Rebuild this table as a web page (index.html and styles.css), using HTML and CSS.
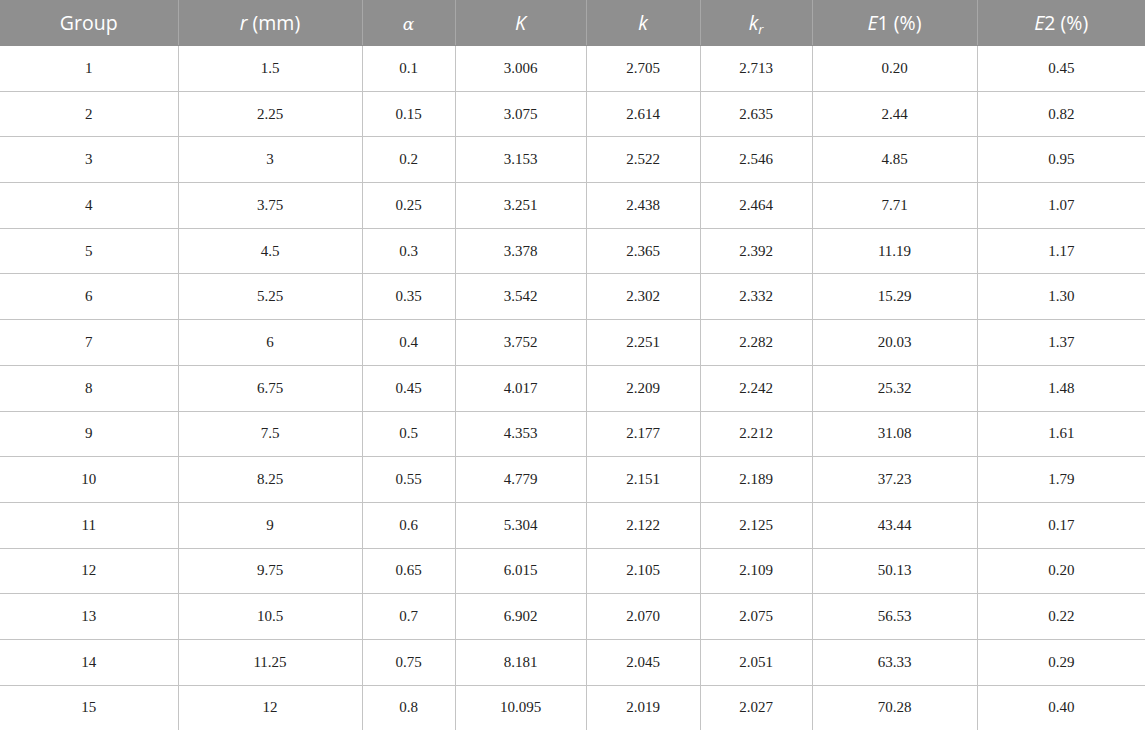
FILE: index.html
```html
<!DOCTYPE html>
<html>
<head>
<meta charset="utf-8">
<link rel="stylesheet" href="styles.css">
</head>
<body>
<table class="data">
<colgroup>
<col class="c1"><col class="c2"><col class="c3"><col class="c4"><col class="c5"><col class="c6"><col class="c7"><col class="c8">
</colgroup>
<thead>
<tr>
<th>Group</th>
<th><i>r</i> (mm)</th>
<th><i class="greek">α</i></th>
<th><i>K</i></th>
<th><i>k</i></th>
<th><i>k<sub>r</sub></i></th>
<th><i>E</i>1 (%)</th>
<th><i>E</i>2 (%)</th>
</tr>
</thead>
<tbody>
<tr><td>1</td><td>1.5</td><td>0.1</td><td>3.006</td><td>2.705</td><td>2.713</td><td>0.20</td><td>0.45</td></tr>
<tr><td>2</td><td>2.25</td><td>0.15</td><td>3.075</td><td>2.614</td><td>2.635</td><td>2.44</td><td>0.82</td></tr>
<tr><td>3</td><td>3</td><td>0.2</td><td>3.153</td><td>2.522</td><td>2.546</td><td>4.85</td><td>0.95</td></tr>
<tr><td>4</td><td>3.75</td><td>0.25</td><td>3.251</td><td>2.438</td><td>2.464</td><td>7.71</td><td>1.07</td></tr>
<tr><td>5</td><td>4.5</td><td>0.3</td><td>3.378</td><td>2.365</td><td>2.392</td><td>11.19</td><td>1.17</td></tr>
<tr><td>6</td><td>5.25</td><td>0.35</td><td>3.542</td><td>2.302</td><td>2.332</td><td>15.29</td><td>1.30</td></tr>
<tr><td>7</td><td>6</td><td>0.4</td><td>3.752</td><td>2.251</td><td>2.282</td><td>20.03</td><td>1.37</td></tr>
<tr><td>8</td><td>6.75</td><td>0.45</td><td>4.017</td><td>2.209</td><td>2.242</td><td>25.32</td><td>1.48</td></tr>
<tr><td>9</td><td>7.5</td><td>0.5</td><td>4.353</td><td>2.177</td><td>2.212</td><td>31.08</td><td>1.61</td></tr>
<tr><td>10</td><td>8.25</td><td>0.55</td><td>4.779</td><td>2.151</td><td>2.189</td><td>37.23</td><td>1.79</td></tr>
<tr><td>11</td><td>9</td><td>0.6</td><td>5.304</td><td>2.122</td><td>2.125</td><td>43.44</td><td>0.17</td></tr>
<tr><td>12</td><td>9.75</td><td>0.65</td><td>6.015</td><td>2.105</td><td>2.109</td><td>50.13</td><td>0.20</td></tr>
<tr><td>13</td><td>10.5</td><td>0.7</td><td>6.902</td><td>2.070</td><td>2.075</td><td>56.53</td><td>0.22</td></tr>
<tr><td>14</td><td>11.25</td><td>0.75</td><td>8.181</td><td>2.045</td><td>2.051</td><td>63.33</td><td>0.29</td></tr>
<tr><td>15</td><td>12</td><td>0.8</td><td>10.095</td><td>2.019</td><td>2.027</td><td>70.28</td><td>0.40</td></tr>
</tbody>
</table>
</body>
</html>
```
FILE: styles.css
```css
html, body {
  margin: 0;
  padding: 0;
  background: #ffffff;
}
.data {
  width: 1145px;
  table-layout: fixed;
  border-collapse: collapse;
}
.c1 { width: 178px; }
.c2 { width: 184px; }
.c3 { width: 93px; }
.c4 { width: 131px; }
.c5 { width: 114px; }
.c6 { width: 112px; }
.c7 { width: 165px; }
.c8 { width: 168px; }
.data th {
  background: #8f8f8f;
  color: #ffffff;
  font-family: "Open Sans", "Noto Sans", sans-serif;
  font-weight: 400;
  font-size: 19.5px;
  height: 45px;
  padding: 0;
  text-align: center;
  border-left: 1px solid #a8a8a8;
  border-bottom: 1px solid #8f8f8f;
}
.data th:first-child { border-left: none; }
.data th sub {
  font-size: 13px;
  vertical-align: -4px;
  line-height: 0;
}
.data th .greek {
  font-family: "DejaVu Serif", serif;
  font-size: 17px;
}
.data td {
  font-family: "Liberation Serif", "Times New Roman", serif;
  font-size: 15px;
  color: #222222;
  height: 44.7px;
  padding: 0;
  text-align: center;
  border-left: 1px solid #c4c4c4;
  border-bottom: 1px solid #c4c4c4;
}
.data td:first-child { border-left: none; }
.data tbody tr:last-child td { border-bottom: none; }
```
